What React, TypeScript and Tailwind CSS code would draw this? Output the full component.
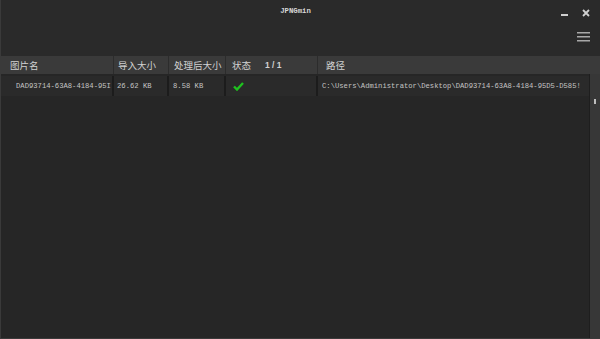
import React from "react";

const mono = { fontFamily: '"Liberation Mono", "DejaVu Sans Mono", monospace' };
const cjk = { fontFamily: '"Noto Sans CJK SC", "Noto Sans", sans-serif' };

export default function App() {
  return (
    <div className="w-[600px] h-[339px] bg-[#262626] flex flex-col border-l border-b border-[#3a3a3a] overflow-hidden">
      {/* title bar */}
      <div className="h-[56px] bg-[#2a2a2a] flex flex-col shrink-0">
        <div className="flex h-[22px] items-center">
          <div className="flex-1" />
          <div className="text-[7.3px] text-[#d8d8d8] font-bold" style={mono}>JPNGmin</div>
          <div className="flex-1 flex justify-end items-center gap-[14px] pr-[10px] pt-[4px]">
            <div className="w-[7px] h-[2px] bg-[#cfcfcf] mt-[4px]" />
            <svg width="8" height="8" viewBox="0 0 8 8">
              <path d="M1 1 L7 7 M7 1 L1 7" stroke="#d0d0d0" strokeWidth="1.8" />
            </svg>
          </div>
        </div>
        <div className="flex justify-end pr-[10px] pt-[10px]">
          <svg width="13" height="10" viewBox="0 0 13 10">
            <rect x="0" y="0" width="13" height="1.5" fill="#a8a8a8" />
            <rect x="0" y="4" width="13" height="1.5" fill="#a8a8a8" />
            <rect x="0" y="8" width="13" height="1.5" fill="#a8a8a8" />
          </svg>
        </div>
      </div>
      {/* header */}
      <div className="h-[18px] bg-[#3a3a3a] flex text-[9.5px] text-[#d2d2d2] shrink-0" style={cjk}>
        <div className="w-[113px] pl-[9px] flex items-center border-r border-[#2c2c2c]">图片名</div>
        <div className="w-[55px] pl-[4px] flex items-center border-r border-[#2c2c2c]">导入大小</div>
        <div className="w-[57px] pl-[5px] flex items-center border-r border-[#2c2c2c]">处理后大小</div>
        <div className="w-[92px] pl-[6px] flex items-center border-r border-[#2c2c2c] gap-[14px]">
          <span>状态</span>
          <span className="text-[8.5px] font-bold" style={{ fontFamily: '"Liberation Sans", sans-serif' }}>1 / 1</span>
        </div>
        <div className="flex-1 pl-[8px] flex items-center">路径</div>
      </div>
      <div className="flex flex-1 min-h-0">
        <div className="flex-1 flex flex-col">
          <div className="h-[2px]" />
          <div className="h-[20px] flex text-[7.2px] text-[#c4c4c4] bg-[#2a2a2a] whitespace-nowrap overflow-hidden" style={mono}>
            <div className="w-[113px] pl-[15px] flex items-center border-r-2 border-[#1c1c1c] overflow-hidden">DAD93714-63A8-4184-95I</div>
            <div className="w-[55px] pl-[3px] flex items-center border-r-2 border-[#1c1c1c]">26.62 KB</div>
            <div className="w-[57px] pl-[4px] flex items-center border-r-2 border-[#1c1c1c]">8.58 KB</div>
            <div className="w-[92px] pl-[7px] flex items-center border-r-2 border-[#1c1c1c]">
              <svg width="11" height="9" viewBox="0 0 11 9">
                <path d="M1 4.5 L4 7.5 L10 1" stroke="#1fc21f" strokeWidth="2.4" fill="none" />
              </svg>
            </div>
            <div className="flex-1 pl-[4px] pr-[8px] flex items-center overflow-hidden">C:\Users\Administrator\Desktop\DAD93714-63A8-4184-95D5-D585!</div>
          </div>
        </div>
        <div className="w-[11px] bg-[#373737] border-l border-[#1e1e1e] flex justify-center pt-[25px]">
          <div className="w-[2px] h-[5px] bg-[#bdbdbd]" />
        </div>
      </div>
    </div>
  );
}
